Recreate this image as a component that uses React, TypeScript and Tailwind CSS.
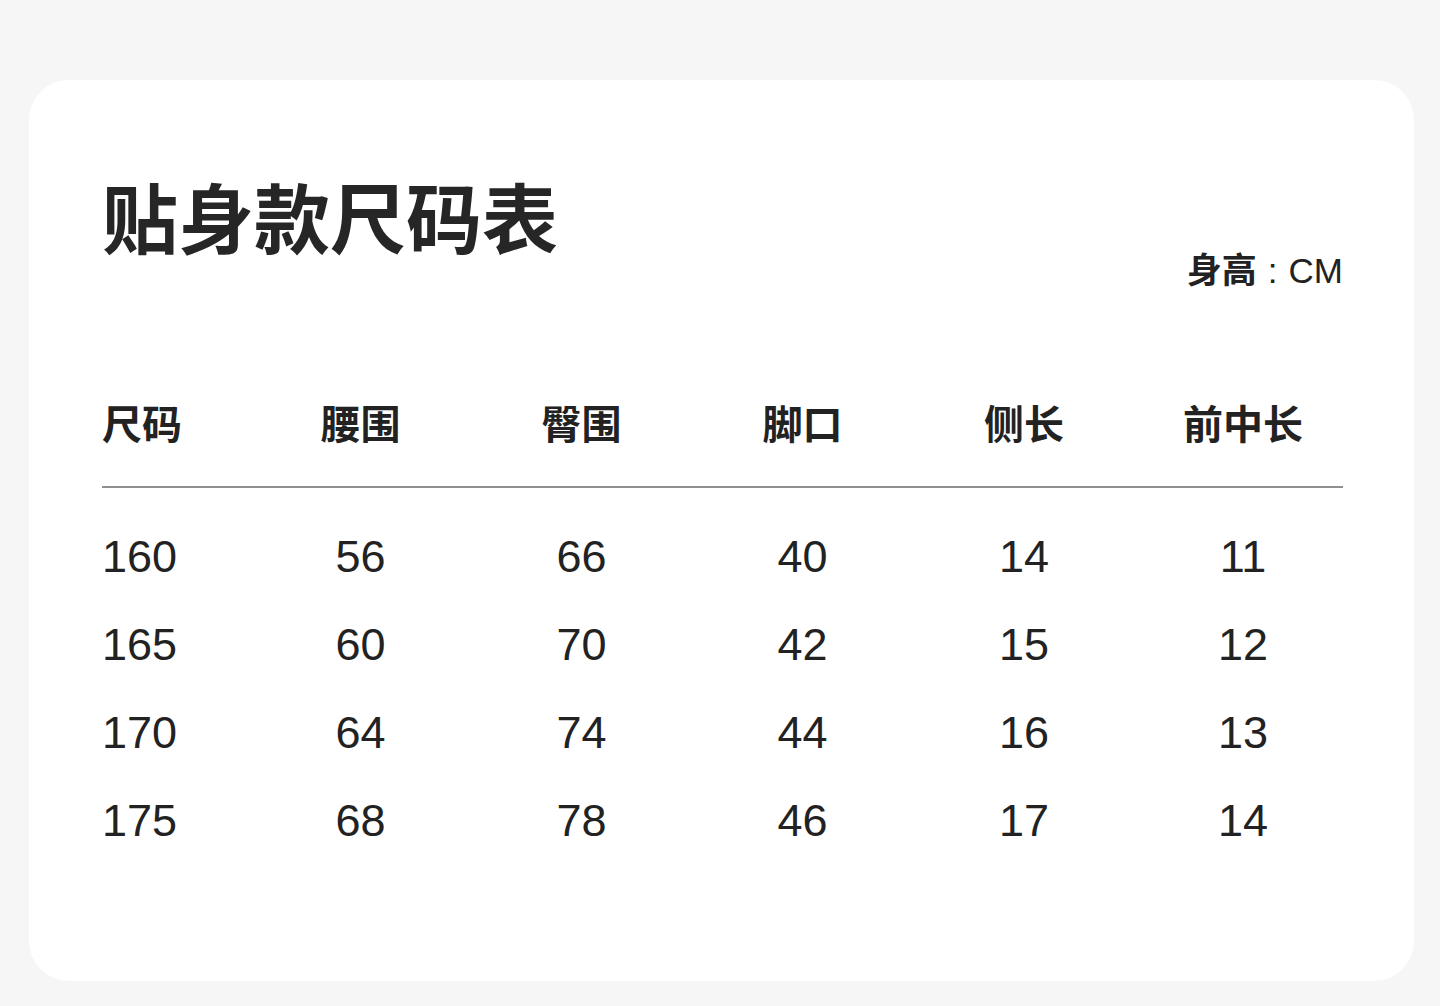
import React from "react";

const headers = ["尺码", "腰围", "臀围", "脚口", "侧长", "前中长"];

const rows = [
  ["160", "56", "66", "40", "14", "11"],
  ["165", "60", "70", "42", "15", "12"],
  ["170", "64", "74", "44", "16", "13"],
  ["175", "68", "78", "46", "17", "14"],
];

const cols = "grid grid-cols-[148px_221px_221px_221px_222px_216px]";

const App: React.FC = () => {
  return (
    <div className="min-h-screen bg-[#f6f6f6] pt-[80px] pb-[26px] font-['Liberation_Sans','Noto_Sans_CJK_SC',sans-serif] text-[#222]">
      <div className="ml-[29px] w-[1385px] rounded-[40px] bg-white pl-[73px] pr-[71px] pt-[104px] pb-[116px]">
        <div className="flex items-start justify-between">
          <h1 className="text-[76px] font-bold leading-none text-[#262626]">
            贴身款尺码表
          </h1>
          <div className="mt-[69px] text-[35px] leading-none">
            <span className="font-bold">身高</span>
            <span className="mx-[11px]">:</span>
            CM
          </div>
        </div>

        <div className={`${cols} mt-[117px] border-b-2 border-[#8f8f8f] pb-[41px]`}>
          {headers.map((h, i) => (
            <div
              key={h}
              className={`text-[40px] font-bold leading-none ${i === 0 ? "text-left" : "text-center"}`}
            >
              {h}
            </div>
          ))}
        </div>

        <div className="mt-[25px]">
          {rows.map((r) => (
            <div key={r[0]} className={`${cols} h-[88px] items-center`}>
              {r.map((v, i) => (
                <div
                  key={i}
                  className={`text-[45px] leading-[88px] ${i === 0 ? "text-left" : "text-center"}`}
                >
                  {v}
                </div>
              ))}
            </div>
          ))}
        </div>
      </div>
    </div>
  );
};

export default App;
